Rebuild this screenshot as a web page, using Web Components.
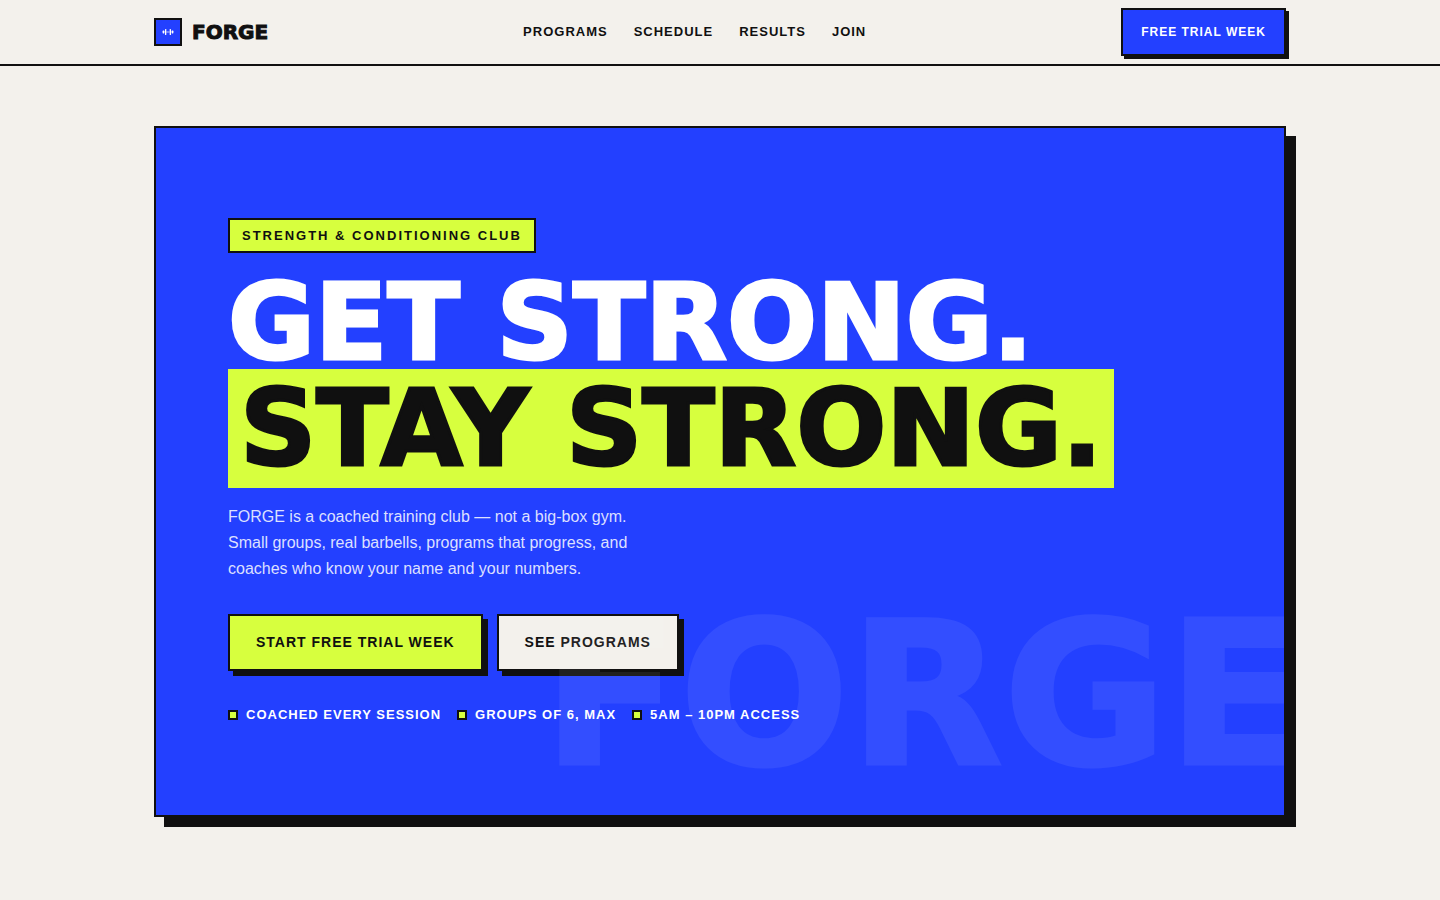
<!DOCTYPE html>
<html lang="en">
<head>
<meta charset="utf-8">
<meta name="viewport" content="width=device-width, initial-scale=1">
<title>FORGE</title>
<style>
  :root {
    --ink: #101010;
    --paper: #f3f1ec;
    --blue: #2340ff;
    --lime: #d7ff3e;
    --display: "DejaVu Sans", "Liberation Sans", sans-serif;
  }
  body {
    margin: 0;
    background: var(--paper);
    color: var(--ink);
    font-family: "Liberation Sans", Arial, sans-serif;
  }
</style>
</head>
<body>
<forge-header>
  <forge-link href="#programs">PROGRAMS</forge-link>
  <forge-link href="#schedule">SCHEDULE</forge-link>
  <forge-link href="#results">RESULTS</forge-link>
  <forge-link href="#join">JOIN</forge-link>
  <forge-button slot="action" variant="small" href="#join">FREE TRIAL WEEK</forge-button>
</forge-header>
<main>
  <forge-hero watermark="FORGE">
    <span slot="badge">STRENGTH &amp; CONDITIONING CLUB</span>
    <span slot="title">GET STRONG.</span>
    <span slot="highlight">STAY STRONG.</span>
    <span slot="lead">FORGE is a coached training club — not a big-box gym. Small groups, real barbells, programs that progress, and coaches who know your name and your numbers.</span>
    <forge-button slot="actions" variant="lime" href="#join">START FREE TRIAL WEEK</forge-button>
    <forge-button slot="actions" variant="paper" href="#programs">SEE PROGRAMS</forge-button>
    <forge-point slot="points">COACHED EVERY SESSION</forge-point>
    <forge-point slot="points">GROUPS OF 6, MAX</forge-point>
    <forge-point slot="points">5AM – 10PM ACCESS</forge-point>
  </forge-hero>
</main>

<script>
class ForgeLink extends HTMLElement {
  constructor() {
    super();
    this.attachShadow({ mode: 'open' });
  }

  connectedCallback() {
    this.shadowRoot.innerHTML = `
      <style>
        :host { display: block; }
        a {
          display: block;
          color: inherit;
          font-size: 13px;
          font-weight: 700;
          line-height: 20px;
          letter-spacing: 1px;
          text-decoration: none;
          white-space: nowrap;
        }
        a:hover { color: var(--blue); }
      </style>
      <a href="${this.getAttribute('href')}"><slot></slot></a>
    `;
  }
}

class ForgeButton extends HTMLElement {
  constructor() {
    super();
    this.attachShadow({ mode: 'open' });
  }

  connectedCallback() {
    this.shadowRoot.innerHTML = `
      <style>
        :host { display: block; }
        a {
          display: block;
          padding: 16px 26px;
          border: 2px solid var(--ink);
          background: var(--lime);
          box-shadow: 5px 5px 0 var(--ink);
          color: var(--ink);
          font-size: 14px;
          font-weight: 700;
          line-height: 21px;
          letter-spacing: 1px;
          text-decoration: none;
          white-space: nowrap;
        }
        :host([variant="paper"]) a { background: var(--paper); }
        :host([variant="small"]) a {
          padding: 12px 18px;
          background: var(--blue);
          box-shadow: 3px 3px 0 var(--ink);
          color: #fff;
          font-size: 12px;
          line-height: 20px;
        }
      </style>
      <a href="${this.getAttribute('href')}"><slot></slot></a>
    `;
  }
}

class ForgePoint extends HTMLElement {
  constructor() {
    super();
    this.attachShadow({ mode: 'open' });
  }

  connectedCallback() {
    this.shadowRoot.innerHTML = `
      <style>
        :host {
          display: flex;
          align-items: center;
          gap: 8px;
          color: #fff;
          font-size: 13px;
          font-weight: 700;
          line-height: 20px;
          letter-spacing: 1px;
        }
        i {
          width: 6px;
          height: 6px;
          border: 2px solid var(--ink);
          background: var(--lime);
        }
      </style>
      <i></i><span><slot></slot></span>
    `;
  }
}

class ForgeHeader extends HTMLElement {
  constructor() {
    super();
    this.attachShadow({ mode: 'open' });
  }

  connectedCallback() {
    this.shadowRoot.innerHTML = `
      <style>
        :host {
          display: block;
          border-bottom: 2px solid var(--ink);
        }
        header {
          display: flex;
          align-items: center;
          justify-content: space-between;
          box-sizing: border-box;
          max-width: 1180px;
          min-height: 64px;
          margin: 0 auto;
          padding: 0 24px;
        }
        .brand {
          display: flex;
          align-items: center;
          gap: 10px;
          color: inherit;
          font: 700 20px/28px var(--display);
          -webkit-text-stroke: 1px currentColor;
          text-decoration: none;
        }
        .mark {
          display: grid;
          place-items: center;
          width: 24px;
          height: 24px;
          border: 2px solid var(--ink);
          background: var(--blue);
        }
        nav {
          display: flex;
          gap: 26px;
        }
      </style>
      <header>
        <a class="brand" href="#top">
          <span class="mark">
            <svg width="12" height="8" viewBox="0 0 12 8" fill="#fff" aria-hidden="true">
              <rect x="0.6" y="2.6" width="1.8" height="2.8" rx="0.6"/>
              <rect x="3" y="1" width="1.3" height="6" rx="0.5"/>
              <rect x="4.3" y="3.5" width="3.4" height="1" opacity="0.7"/>
              <rect x="7.7" y="1" width="1.3" height="6" rx="0.5"/>
              <rect x="9.6" y="2.6" width="1.8" height="2.8" rx="0.6"/>
            </svg>
          </span>
          <span>FORGE</span>
        </a>
        <nav><slot></slot></nav>
        <slot name="action"></slot>
      </header>
    `;
  }
}

class ForgeHero extends HTMLElement {
  constructor() {
    super();
    this.attachShadow({ mode: 'open' });
  }

  connectedCallback() {
    this.shadowRoot.innerHTML = `
      <style>
        :host {
          display: block;
          box-sizing: border-box;
          max-width: 1180px;
          margin: 0 auto;
          padding: 60px 24px 72px;
        }
        .card {
          position: relative;
          overflow: hidden;
          padding: 90px 72px;
          border: 2px solid var(--ink);
          background: var(--blue);
          box-shadow: 10px 10px 0 var(--ink);
        }
        .badge {
          width: fit-content;
          padding: 6px 12px;
          border: 2px solid var(--ink);
          background: var(--lime);
          font-size: 13px;
          font-weight: 700;
          line-height: 19px;
          letter-spacing: 2px;
        }
        h1 {
          margin: 24px 0 16px;
          color: #fff;
          font: 700 106px/92px var(--display);
        }
        /* the stroke thickens the bold face to a black weight */
        .line {
          display: block;
          width: fit-content;
          -webkit-text-stroke: 3px currentColor;
          white-space: nowrap;
        }
        .marked {
          padding: 0 12px;
          background: var(--lime);
          color: var(--ink);
          line-height: 119px;
        }
        p {
          max-width: 430px;
          margin: 0 0 32px;
          color: rgba(255, 255, 255, 0.85);
          font-size: 16px;
          line-height: 26px;
        }
        .actions {
          display: flex;
          flex-wrap: wrap;
          gap: 14px;
          margin-bottom: 34px;
        }
        .points {
          display: flex;
          flex-wrap: wrap;
          gap: 16px;
        }
        /* oversized wordmark, bleeds off the right edge of the card */
        .watermark {
          position: absolute;
          right: -20px;
          bottom: 0;
          color: #fff;
          font: 700 200px/240px var(--display);
          -webkit-text-stroke: 3px currentColor;
          opacity: 0.07;
          pointer-events: none;
        }
      </style>
      <section class="card">
        <div class="badge"><slot name="badge"></slot></div>
        <h1>
          <span class="line"><slot name="title"></slot></span>
          <span class="line marked"><slot name="highlight"></slot></span>
        </h1>
        <p><slot name="lead"></slot></p>
        <div class="actions"><slot name="actions"></slot></div>
        <div class="points"><slot name="points"></slot></div>
        <div class="watermark" aria-hidden="true">${this.getAttribute('watermark')}</div>
      </section>
    `;
  }
}

customElements.define('forge-link', ForgeLink);
customElements.define('forge-button', ForgeButton);
customElements.define('forge-point', ForgePoint);
customElements.define('forge-header', ForgeHeader);
customElements.define('forge-hero', ForgeHero);
</script>
</body>
</html>
